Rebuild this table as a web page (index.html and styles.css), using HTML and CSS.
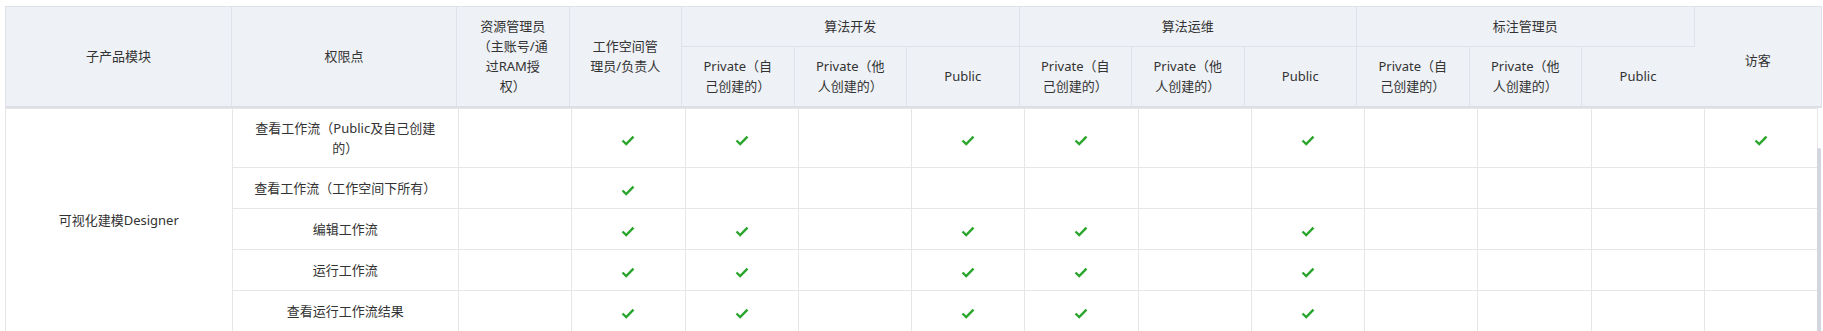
FILE: index.html
```html
<!DOCTYPE html>
<html lang="zh-CN">
<head>
<meta charset="utf-8">
<title>权限表</title>
<link rel="stylesheet" href="styles.css">
</head>
<body>
<div class="wrap">
  <table class="head">
    <colgroup>
      <col class="hw"><col class="hw2">
      <col class="hn"><col class="hn"><col class="hn"><col class="hn"><col class="hn"><col class="hn"><col class="hn"><col class="hn"><col class="hn"><col class="hn"><col class="hn">
      <col class="hg">
    </colgroup>
    <thead>
      <tr>
        <th rowspan="2" class="hb">子产品模块</th>
        <th rowspan="2" class="hb">权限点</th>
        <th rowspan="2" class="hb">资源管理员（主账号/通过RAM授权）</th>
        <th rowspan="2" class="hb">工作空间管理员/负责人</th>
        <th colspan="3" class="grp">算法开发</th>
        <th colspan="3" class="grp">算法运维</th>
        <th colspan="3" class="grp">标注管理员</th>
        <th rowspan="2" class="hb guest">访客</th>
      </tr>
      <tr>
        <th class="hb">Private（自己创建的）</th>
        <th class="hb">Private（他人创建的）</th>
        <th class="hb">Public</th>
        <th class="hb">Private（自己创建的）</th>
        <th class="hb">Private（他人创建的）</th>
        <th class="hb">Public</th>
        <th class="hb">Private（自己创建的）</th>
        <th class="hb">Private（他人创建的）</th>
        <th class="hb last-sub">Public</th>
      </tr>
    </thead>
  </table>
  <table class="body">
    <colgroup>
      <col class="bw"><col class="bw">
      <col class="bn"><col class="bn"><col class="bn"><col class="bn"><col class="bn"><col class="bn"><col class="bn"><col class="bn"><col class="bn"><col class="bn"><col class="bn"><col class="bn">
    </colgroup>
    <tbody>
      <tr class="r1">
        <td rowspan="5">可视化建模Designer</td>
        <td>查看工作流（Public及自己创建的）</td>
        <td></td>
        <td><svg class="ok" viewBox="0 0 14 11"><polyline points="1.5,5.5 5.2,9 12.5,1.6"/></svg></td>
        <td><svg class="ok" viewBox="0 0 14 11"><polyline points="1.5,5.5 5.2,9 12.5,1.6"/></svg></td>
        <td></td>
        <td><svg class="ok" viewBox="0 0 14 11"><polyline points="1.5,5.5 5.2,9 12.5,1.6"/></svg></td>
        <td><svg class="ok" viewBox="0 0 14 11"><polyline points="1.5,5.5 5.2,9 12.5,1.6"/></svg></td>
        <td></td>
        <td><svg class="ok" viewBox="0 0 14 11"><polyline points="1.5,5.5 5.2,9 12.5,1.6"/></svg></td>
        <td></td>
        <td></td>
        <td></td>
        <td><svg class="ok" viewBox="0 0 14 11"><polyline points="1.5,5.5 5.2,9 12.5,1.6"/></svg></td>
      </tr>
      <tr>
        <td>查看工作流（工作空间下所有）</td>
        <td></td>
        <td><svg class="ok" viewBox="0 0 14 11"><polyline points="1.5,5.5 5.2,9 12.5,1.6"/></svg></td>
        <td></td><td></td><td></td><td></td><td></td><td></td><td></td><td></td><td></td><td></td>
      </tr>
      <tr>
        <td>编辑工作流</td>
        <td></td>
        <td><svg class="ok" viewBox="0 0 14 11"><polyline points="1.5,5.5 5.2,9 12.5,1.6"/></svg></td>
        <td><svg class="ok" viewBox="0 0 14 11"><polyline points="1.5,5.5 5.2,9 12.5,1.6"/></svg></td>
        <td></td>
        <td><svg class="ok" viewBox="0 0 14 11"><polyline points="1.5,5.5 5.2,9 12.5,1.6"/></svg></td>
        <td><svg class="ok" viewBox="0 0 14 11"><polyline points="1.5,5.5 5.2,9 12.5,1.6"/></svg></td>
        <td></td>
        <td><svg class="ok" viewBox="0 0 14 11"><polyline points="1.5,5.5 5.2,9 12.5,1.6"/></svg></td>
        <td></td><td></td><td></td><td></td>
      </tr>
      <tr>
        <td>运行工作流</td>
        <td></td>
        <td><svg class="ok" viewBox="0 0 14 11"><polyline points="1.5,5.5 5.2,9 12.5,1.6"/></svg></td>
        <td><svg class="ok" viewBox="0 0 14 11"><polyline points="1.5,5.5 5.2,9 12.5,1.6"/></svg></td>
        <td></td>
        <td><svg class="ok" viewBox="0 0 14 11"><polyline points="1.5,5.5 5.2,9 12.5,1.6"/></svg></td>
        <td><svg class="ok" viewBox="0 0 14 11"><polyline points="1.5,5.5 5.2,9 12.5,1.6"/></svg></td>
        <td></td>
        <td><svg class="ok" viewBox="0 0 14 11"><polyline points="1.5,5.5 5.2,9 12.5,1.6"/></svg></td>
        <td></td><td></td><td></td><td></td>
      </tr>
      <tr>
        <td>查看运行工作流结果</td>
        <td></td>
        <td><svg class="ok" viewBox="0 0 14 11"><polyline points="1.5,5.5 5.2,9 12.5,1.6"/></svg></td>
        <td><svg class="ok" viewBox="0 0 14 11"><polyline points="1.5,5.5 5.2,9 12.5,1.6"/></svg></td>
        <td></td>
        <td><svg class="ok" viewBox="0 0 14 11"><polyline points="1.5,5.5 5.2,9 12.5,1.6"/></svg></td>
        <td><svg class="ok" viewBox="0 0 14 11"><polyline points="1.5,5.5 5.2,9 12.5,1.6"/></svg></td>
        <td></td>
        <td><svg class="ok" viewBox="0 0 14 11"><polyline points="1.5,5.5 5.2,9 12.5,1.6"/></svg></td>
        <td></td><td></td><td></td><td></td>
      </tr>
    </tbody>
  </table>
  <div class="scroll-thumb"></div>
</div>
</body>
</html>
```

FILE: styles.css
```css
html, body {
  margin: 0;
  padding: 0;
  background: #ffffff;
}

body {
  font-family: "Noto Sans", "Noto Sans CJK SC", sans-serif;
  font-size: 13px;
  color: #333333;
  overflow: hidden;
  text-spacing-trim: space-all;
}

.wrap {
  position: relative;
  padding: 6px 0 0 5px;
  width: 1818px;
}

table {
  border-collapse: collapse;
  table-layout: fixed;
}

/* header table */
.head {
  width: 1816px;
}

.hw { width: 226px; }
.hw2 { width: 225px; }
.hn { width: 112.5px; }
.hg { width: 127.5px; }

.head th {
  background: #eef1f6;
  border: 1px solid #dfe3e9;
  font-weight: normal;
  padding: 9px 18px 10px;
  line-height: 20px;
  text-align: center;
  vertical-align: middle;
  word-break: break-all;
}

.head th.hb {
  border-bottom: 2px solid #dcdfe5;
}

.head th.last-sub {
  border-right: none;
}

.head th.guest {
  border-left: none;
  padding-top: 15px;
  padding-bottom: 9px;
}

/* body table */
.body {
  width: 1812px;
}

.bw { width: 226.5px; }
.bn { width: 113.25px; }

.body td {
  border: 1px solid #e6e6e6;
  padding: 10px 18px;
  line-height: 20px;
  height: 20px;
  text-align: center;
  vertical-align: middle;
  word-break: break-all;
}

.body tr.r1 td {
  padding: 9px 18px;
}

.ok {
  display: inline-block;
  width: 14px;
  height: 11px;
  vertical-align: middle;
  margin-top: 1px;
}

.ok polyline {
  fill: none;
  stroke: #2aa52c;
  stroke-width: 2.4;
  stroke-linecap: butt;
  stroke-linejoin: miter;
}

.scroll-thumb {
  position: absolute;
  left: 1817px;
  top: 148px;
  width: 4px;
  height: 200px;
  background: #d3d6de;
  border-radius: 2px;
}
```
